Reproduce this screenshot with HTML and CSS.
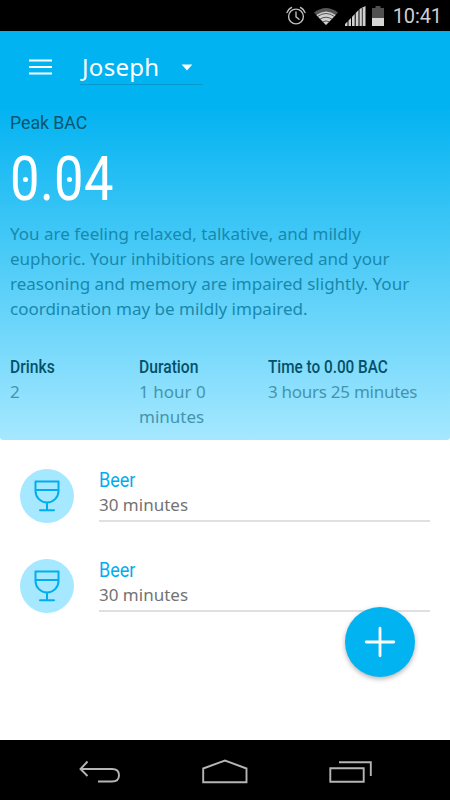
FILE: index.html
```html
<!DOCTYPE html>
<html lang="en">
<head>
<meta charset="utf-8">
<title>Peak BAC</title>
<link rel="stylesheet" href="styles.css">
</head>
<body>
<div class="status">
  <svg class="status-icons" width="102" height="22" viewBox="0 0 102 22">
    <g fill="none" stroke="#bdbdbd" stroke-width="1.4" stroke-linecap="round"><circle cx="11" cy="11.5" r="7.4"/><path d="M11 7v4.800l3 2.500M2 7.500q1.500-3.500 4.500-5M20 7.500q-1.500-3.500-4.500-5"/></g>
    <path d="M29 7.500q12-9 24 0L41 20z" fill="#555"/>
    <path d="M31.300 10q9.700-7 19.400 0L41 20z" fill="#d0d0d0"/>
    <path d="M32.500 11.500q8.500-6 17 0M35 14.200q6-4 12 0M37.500 17q3.500-2.200 7 0" fill="none" stroke="#333" stroke-width=".8"/>
    <path d="M60 21v-2l2.500-2.500V21zM63.500 21v-5.500l2.500-2.500v8zM67 21v-9l2.700-3v12zM70.700 21V8l2.800-3v16zM74.500 21V4l6-3v20z" fill="#d0d0d0"/>
    <path d="M77.300 3v18" stroke="#222" stroke-width=".9"/>
    <path d="M87 3h3.500V1h5v2H99v10H87z" fill="#505050"/><path d="M87 13h12v8H87z" fill="#d6d6d6"/>
  </svg>
  <span class="clock">10:41</span>
</div>
<header class="hero">
  <div class="bar">
    <svg class="menu" width="24" height="18" viewBox="0 0 24 18"><path d="M1 2.500h23M1 9h23M1 15.500h23" stroke="#fff" stroke-width="2.200"/></svg>
    <div class="select"><span class="person">Joseph</span><svg width="12" height="7" viewBox="0 0 12 7"><path d="M.7.500h10.600L6 6.500z" fill="#fff"/></svg></div>
  </div>
  <h1 class="label peak">Peak BAC</h1>
  <div class="value"><span class="zero">0</span><span class="dot">.</span><span class="zero">0</span><span class="four">4</span></div>
  <p class="desc">You are feeling relaxed, talkative, and mildly<br>euphoric. Your inhibitions are lowered and your<br>reasoning and memory are impaired slightly. Your<br>coordination may be mildly impaired.</p>
  <div class="stats">
    <div><h2 class="label">Drinks</h2><p>2</p></div>
    <div><h2 class="label">Duration</h2><p>1 hour 0<br>minutes</p></div>
    <div><h2 class="label wide">Time to 0.00 BAC</h2><p class="long">3 hours 25 minutes</p></div>
  </div>
</header>
<main class="list">
  <div class="item">
    <div class="avatar"><svg width="26" height="32" viewBox="0 0 26 32"><path d="M1.500 1.500h23V11a11.500 11.500 0 0 1-23 0zM1.500 10h23M13 22.500V30M6 30.300h14" fill="none" stroke="#00aeef" stroke-width="2" stroke-linecap="round" stroke-linejoin="round"/></svg></div>
    <div class="info"><h3>Beer</h3><p>30 minutes</p></div>
  </div>
  <div class="item">
    <div class="avatar"><svg width="26" height="32" viewBox="0 0 26 32"><path d="M1.500 1.500h23V11a11.500 11.500 0 0 1-23 0zM1.500 10h23M13 22.500V30M6 30.300h14" fill="none" stroke="#00aeef" stroke-width="2" stroke-linecap="round" stroke-linejoin="round"/></svg></div>
    <div class="info"><h3>Beer</h3><p>30 minutes</p></div>
  </div>
  <button class="fab" aria-label="Add drink"><svg width="32" height="32" viewBox="0 0 32 32"><path d="M16 2.200v27.600M2.200 16h27.600" stroke="#fff" stroke-width="2.800" stroke-linecap="round"/></svg></button>
</main>
<nav class="nav">
  <svg width="42" height="24" viewBox="0 0 42 24"><path d="M8.500 1.500L1.500 9l7 7M1.500 9H33q7 0 7 6.200T33 21.500H19" fill="none" stroke="#b5b5b5" stroke-width="1.900"/></svg>
  <svg width="46" height="25" viewBox="0 0 46 25"><path d="M1.200 9.500L23 1.500l21.500 8v13.800H1.200z" fill="none" stroke="#b5b5b5" stroke-width="1.900"/></svg>
  <svg width="44" height="24" viewBox="0 0 44 24"><path d="M1.300 8.300h33.400v13.500H1.300zM10 2.300h31.800V16" fill="none" stroke="#b5b5b5" stroke-width="1.900"/></svg>
</nav>
</body>
</html>
```
FILE: styles.css
```css
* { box-sizing: border-box; margin: 0; padding: 0; }
body { width: 450px; height: 800px; background: #fff; font-family: "Noto Sans", sans-serif; display: flex; flex-direction: column; overflow: hidden; }
.status { height: 31px; background: #000; display: flex; justify-content: flex-end; align-items: center; padding-right: 8px; }
.status-icons { margin: 0 6px 0 0; }
.clock { color: #cfcfcf; font: 20px/30px Roboto, sans-serif; letter-spacing: -.1px; }
.hero { height: 409px; background: linear-gradient(#02b3f1 0, #02b3f1 75px, #a5e8ff 409px); border-radius: 0 0 3px 3px; padding: 0 10px; }
.bar { height: 54px; display: flex; padding: 17px 0 0 18px; }
.menu { margin-top: 10px; }
.select { width: 123px; height: 37px; margin-left: 28px; border-bottom: 1px solid #0599ce; display: flex; align-items: center; justify-content: space-between; padding: 2px 10px 0 2px; }
.person { color: #fff; font-size: 24px; line-height: 34px; letter-spacing: .3px; }
.label { font: 500 19px/24px Roboto, sans-serif; color: #06566f; transform-origin: 0 50%; white-space: nowrap; width: max-content; }
.peak { font-weight: 400; margin-top: 26px; transform: scaleX(.93); }
.value { height: 66px; margin-top: 11px; display: flex; font: 400 61px/66px Roboto, sans-serif; color: #fff; }
.value span { transform: scaleX(.86); transform-origin: 0 50%; }
.zero { width: 30px; position: relative; }
.zero::after { content: ""; position: absolute; left: 15px; top: 31px; width: 6px; height: 5px; border-radius: 50%; background: #fff; }
.dot { width: 14px; }
.desc { margin-top: 9px; color: #1888ad; font-size: 17px; line-height: 25px; white-space: nowrap; }
.stats { display: grid; grid-template-columns: 129px 129px 1fr; margin-top: 34px; }
.stats .label { font-size: 18px; transform: scaleX(.87); color: #055069; }
.stats .wide { transform: scaleX(.85); }
.stats p { font-size: 17px; line-height: 25px; color: #4594ae; white-space: nowrap; }
.stats .long { letter-spacing: -.27px; }
.list { height: 300px; padding: 28px 20px 0; position: relative; }
.item { height: 90px; display: flex; gap: 25px; }
.avatar { width: 54px; height: 54px; margin-top: 1px; border-radius: 50%; background: #a5e8ff; display: flex; align-items: center; justify-content: center; }
.info { flex: 1; height: 54px; border-bottom: 2px solid #e0e0e0; }
.info h3 { font: 400 20px/24px Roboto, sans-serif; color: #00aeef; transform: scaleX(.9); transform-origin: 0 50%; }
.info p { font-size: 17px; line-height: 25px; color: #737373; }
.fab { position: absolute; right: 35px; top: 167px; width: 70px; height: 70px; border: 0; border-radius: 50%; background: #02b3f1; display: flex; align-items: center; justify-content: center; box-shadow: 0 2px 5px rgba(0,0,0,.3); }
.nav { height: 60px; background: #000; display: flex; justify-content: space-between; align-items: center; padding: 3px 77px 0 79px; }
```
